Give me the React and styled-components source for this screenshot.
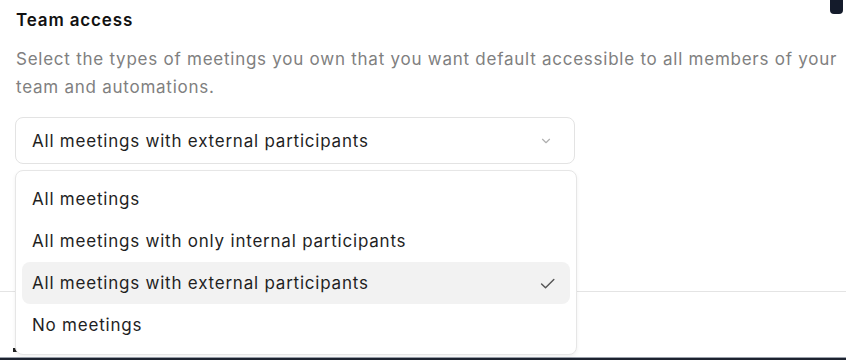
import React, { useState } from "react";
import styled, { createGlobalStyle } from "styled-components";

const GlobalStyle = createGlobalStyle`
  html, body {
    margin: 0;
    padding: 0;
    background: #ffffff;
  }
  body {
    font-family: Inter, "Noto Sans", "Liberation Sans", sans-serif;
    -webkit-font-smoothing: antialiased;
  }
`;

const Page = styled.div`
  position: relative;
  width: 846px;
  height: 360px;
  overflow: hidden;
  display: flex;
  flex-direction: column;
  background: #fff;
`;

const CornerButton = styled.div`
  position: absolute;
  top: -10px;
  right: 3px;
  width: 13px;
  height: 24px;
  background: #141b2b;
  border-radius: 4px;
`;

const Section = styled.section`
  padding: 11px 2px 0 16px;
  height: 291px;
  box-sizing: border-box;
`;

const Heading = styled.h3`
  margin: 0;
  font-size: 17px;
  line-height: 18px;
  font-weight: 600;
  color: #111;
  letter-spacing: 0.85px;
`;

const Description = styled.p`
  margin: 16px 0 0 0;
  font-size: 17px;
  line-height: 28px;
  color: #808080;
  letter-spacing: 0.75px;
`;

const SelectWrap = styled.div`
  position: relative;
  width: 560px;
  margin: 16px 0 0 -1px;
`;

const Trigger = styled.button`
  width: 100%;
  height: 47px;
  display: flex;
  align-items: center;
  justify-content: space-between;
  padding: 0 21px 0 16px;
  box-sizing: border-box;
  border: 1px solid #e3e3e3;
  border-radius: 8px;
  background: #fff;
  font-family: inherit;
  font-size: 17px;
  letter-spacing: 0.78px;
  color: #1f1f1f;
  cursor: pointer;
`;

const Menu = styled.ul`
  position: absolute;
  z-index: 2;
  top: 53px;
  left: 0;
  width: 562px;
  margin: 0;
  padding: 7px 6px 8px 6px;
  box-sizing: border-box;
  list-style: none;
  background: #fff;
  border: 1px solid #e6e6e6;
  border-radius: 8px;
  box-shadow: 0 2px 4px rgba(0, 0, 0, 0.06);
`;

const Item = styled.li`
  height: 42px;
  display: flex;
  align-items: center;
  justify-content: space-between;
  padding: 0 13px 0 10px;
  border-radius: 8px;
  font-size: 17px;
  letter-spacing: 0.78px;
  color: #1f1f1f;
  background: ${({ $active }) => ($active ? "#f2f2f2" : "transparent")};
  cursor: pointer;
`;

const Divider = styled.div`
  border-top: 1px solid #e4e4e4;
  flex: 1;
  position: relative;
`;

const Mark = styled.div`
  position: absolute;
  left: 13px;
  bottom: 5px;
  width: 4px;
  height: 4px;
  background: #222;
`;

const BottomBar = styled.div`
  height: 2px;
  background: #1d2330;
  border-top: 1px solid #9aa0aa;
`;

const Chevron = () => (
  <svg width="14" height="14" viewBox="0 0 24 24" fill="none" stroke="#b0b0b0" strokeWidth="2" strokeLinecap="round" strokeLinejoin="round">
    <path d="M6 9l6 6 6-6" />
  </svg>
);

const Check = () => (
  <svg width="19" height="19" viewBox="0 0 24 24" fill="none" stroke="#555" strokeWidth="1.8" strokeLinecap="round" strokeLinejoin="round">
    <path d="M4.5 12.5l5 5L20 7" />
  </svg>
);

const options = [
  "All meetings",
  "All meetings with only internal participants",
  "All meetings with external participants",
  "No meetings",
];

export default function App() {
  const [selected, setSelected] = useState(2);

  return (
    <>
      <GlobalStyle />
      <Page>
        <CornerButton />
        <Section>
          <Heading>Team access</Heading>
          <Description>
            Select the types of meetings you own that you want default accessible to all members of your team and automations.
          </Description>
          <SelectWrap>
            <Trigger>
              <span>{options[selected]}</span>
              <Chevron />
            </Trigger>
            <Menu>
              {options.map((o, i) => (
                <Item key={o} $active={i === selected} onClick={() => setSelected(i)}>
                  <span>{o}</span>
                  {i === selected && <Check />}
                </Item>
              ))}
            </Menu>
          </SelectWrap>
        </Section>
        <Divider>
          <Mark />
        </Divider>
        <BottomBar />
      </Page>
    </>
  );
}
